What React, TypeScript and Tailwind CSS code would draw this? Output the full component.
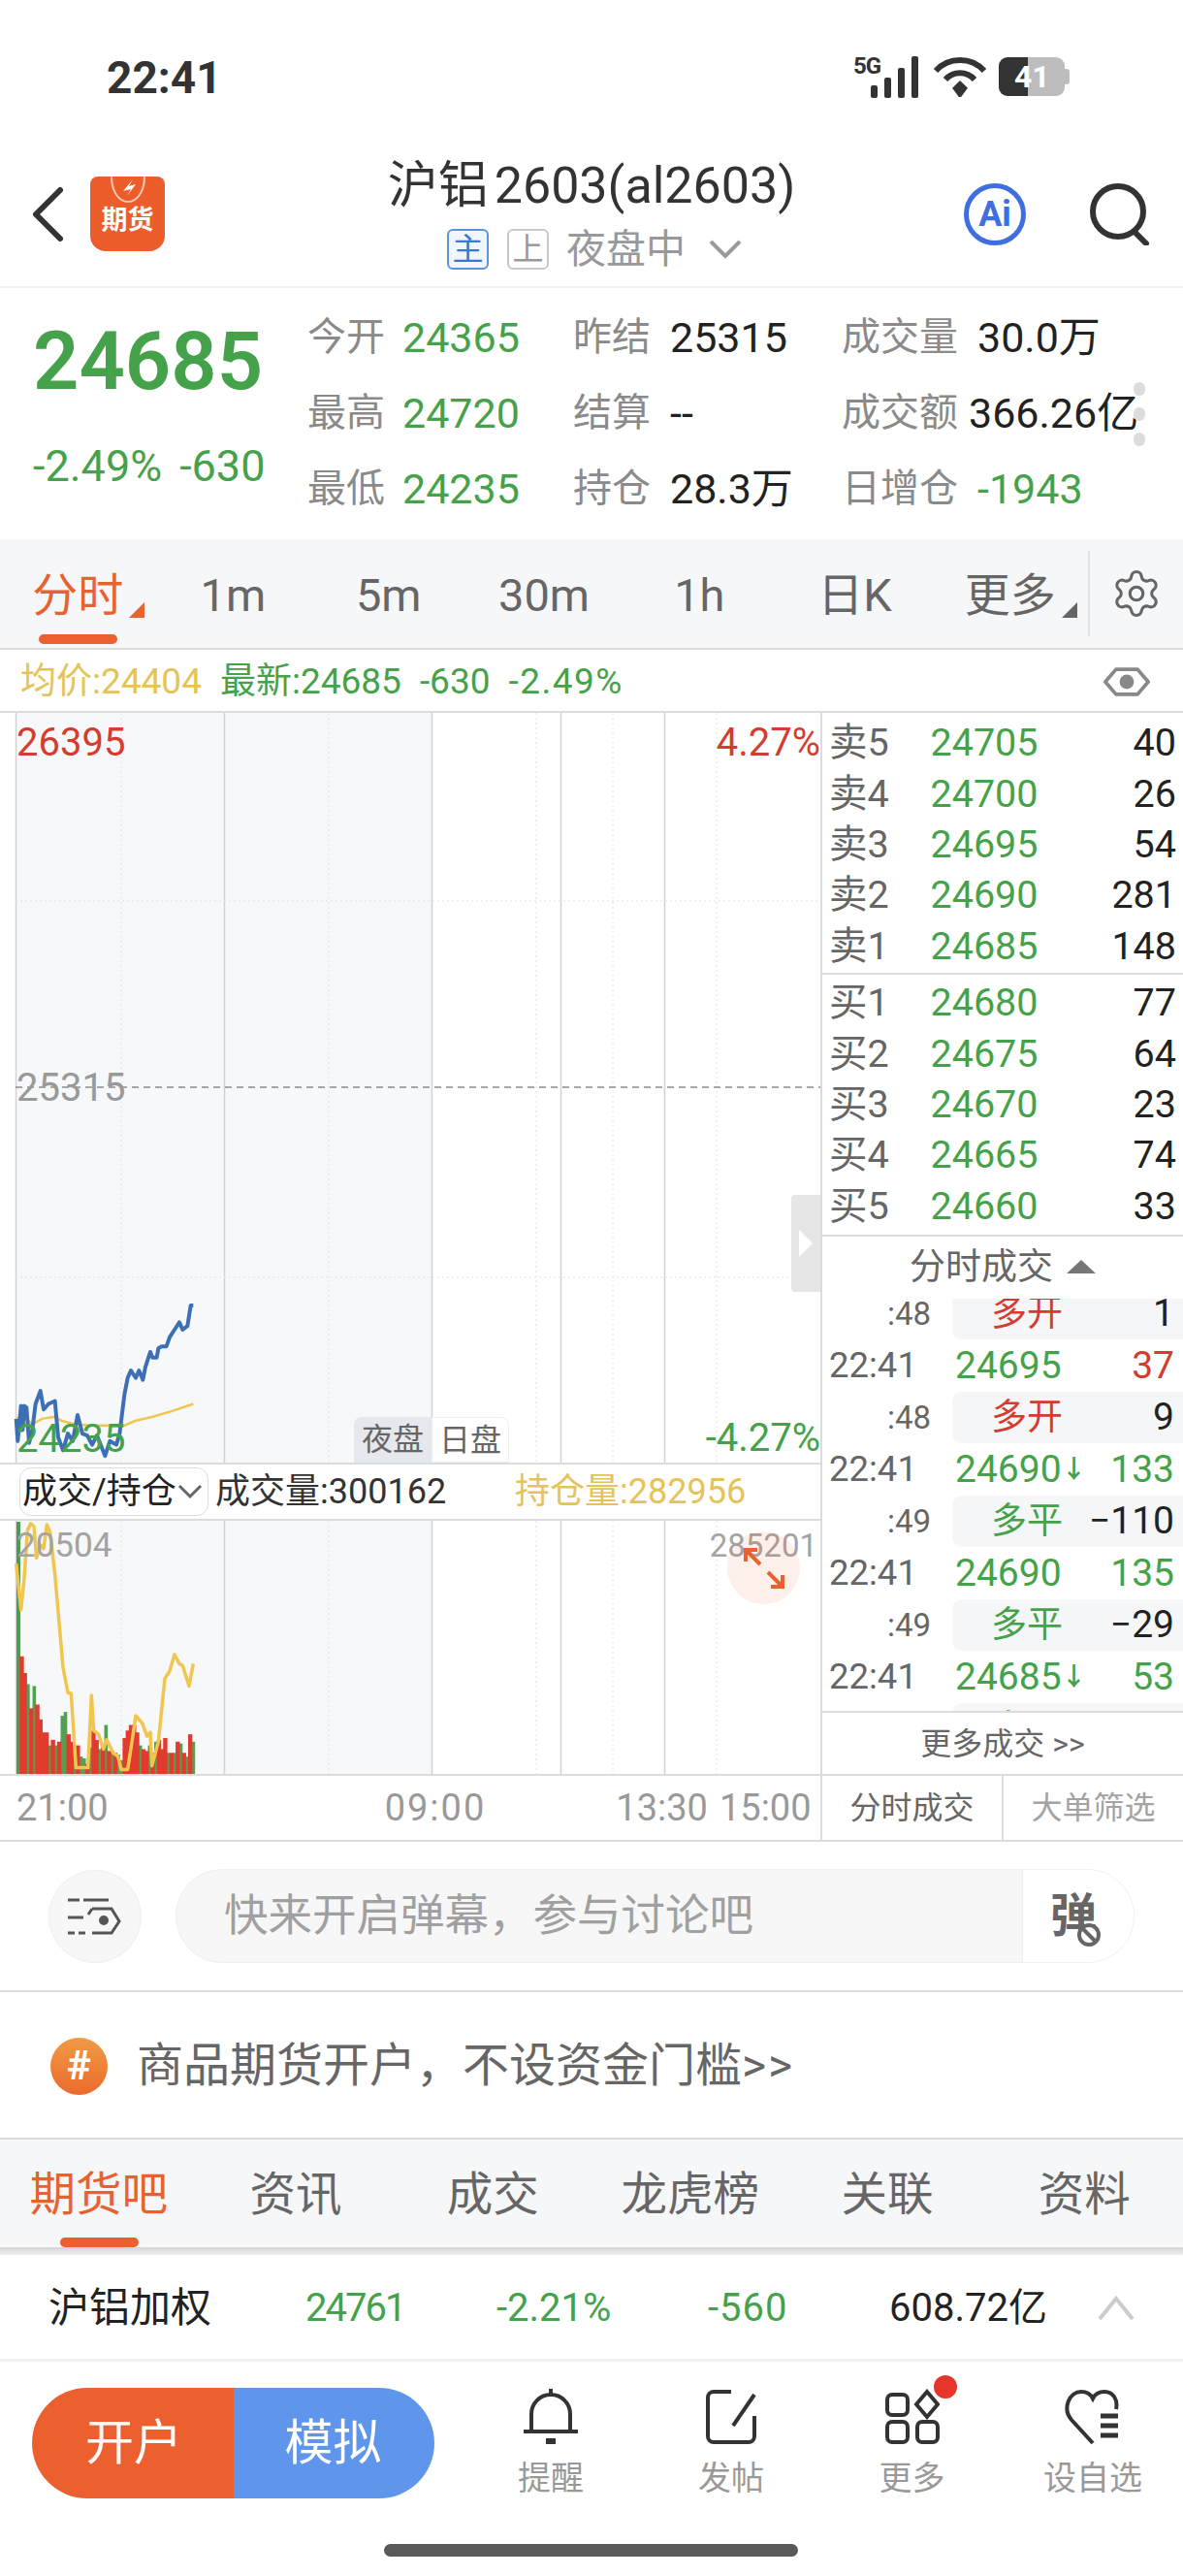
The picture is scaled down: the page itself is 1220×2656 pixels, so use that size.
import React from 'react';
import { Settings } from 'lucide-react';

const GREEN = 'text-[#46a24a]';

// chart traces, read off the reference at x*3, y*2.613 from y=1260
const priceLine = [[50,530],[55,590],[65,495],[70,560],[75,495],[82,500],[90,595],[100,560],[110,490],[125,455],[135,505],[150,490],[170,482],[180,580],[195,615],[210,570],[225,590],[240,520],[255,570],[270,575],[285,600],[300,575],[325,630],[340,590],[360,600],[370,570],[385,465],[395,420],[405,400],[420,420],[430,400],[442,425],[450,390],[465,350],[472,365],[485,365],[490,340],[500,335],[515,335],[525,310],[540,290],[555,270],[565,290],[580,280],[590,225],[598,225]];
const avgLine = [[50,530],[75,525],[100,545],[130,530],[165,525],[190,535],[230,545],[280,548],[330,548],[380,550],[420,535],[470,525],[530,510],[598,490]];
const holdLine = [[50,920],[65,1045],[75,960],[85,830],[95,812],[105,820],[113,905],[125,870],[135,880],[145,815],[155,835],[170,950],[185,1100],[195,1200],[210,1268],[220,1270],[235,1470],[265,1470],[272,1470],[283,1275],[290,1370],[305,1380],[320,1420],[330,1395],[350,1430],[365,1440],[375,1475],[395,1475],[410,1390],[420,1330],[440,1350],[455,1385],[465,1375],[470,1465],[490,1400],[510,1230],[525,1210],[540,1165],[555,1190],[565,1195],[585,1250],[598,1190]];
const volBars: [string, number][] = [['r',1170],['r',1215],['g',1245],['r',1310],['g',1250],['r',1300],['r',1340],['r',1375],['r',1375],['g',1410],['r',1395],['g',1410],['r',1400],['g',1330],['g',1320],['r',1380],['r',1400],['g',1430],['r',1410],['g',1440],['g',1445],['r',1460],['g',1415],['r',1370],['r',1395],['g',1420],['r',1405],['g',1355],['r',1425],['g',1425],['r',1430],['g',1435],['g',1450],['r',1390],['r',1370],['r',1355],['r',1355],['r',1375],['g',1410],['r',1420],['r',1425],['g',1410],['r',1430],['g',1400],['r',1395],['r',1420],['r',1390],['g',1430],['r',1430],['g',1430],['r',1400],['g',1405],['r',1430],['g',1440],['r',1380],['g',1400]];

const toPoints = (pts: number[][], top: number) =>
  pts.map(([x, y]) => `${x / 3},${1260 + y / 2.613 - top}`).join(' ');

const asks = [['卖5','24705','40'],['卖4','24700','26'],['卖3','24695','54'],['卖2','24690','281'],['卖1','24685','148']];
const bids = [['买1','24680','77'],['买2','24675','64'],['买3','24670','23'],['买4','24665','74'],['买5','24660','33']];

const trades = [
  { sec: ':48', tag: '多开', red: true, qty: '1', price: '24695', arrow: false, vol: '37', volRed: true },
  { sec: ':48', tag: '多开', red: true, qty: '9', price: '24690', arrow: true, vol: '133', volRed: false },
  { sec: ':49', tag: '多平', red: false, qty: '−110', price: '24690', arrow: false, vol: '135', volRed: false },
  { sec: ':49', tag: '多平', red: false, qty: '−29', price: '24685', arrow: true, vol: '53', volRed: false },
];

const GridLines = ({ h }: { h: number }) => (
  <>
    <rect x="16" y="0" width="429" height={h} fill="#f6f8fa" />
    {[125, 339, 553, 632, 739].map((x) => (
      <line key={x} x1={x} x2={x} y1="0" y2={h} stroke="#e2e2e2" strokeWidth="1" strokeDasharray="2 3" />
    ))}
    {[16, 231, 445, 578, 685].map((x) => (
      <line key={x} x1={x + 0.5} x2={x + 0.5} y1="0" y2={h} stroke="#d2d2d2" strokeWidth="1.5" />
    ))}
  </>
);

const StatRow = ({ label, value, valueClass, w }: { label: string; value: string; valueClass: string; w: string }) => (
  <div className="flex items-center h-[78px]">
    <span className={`text-[40px] leading-none text-[#8a8a8a] ${w}`}>{label}</span>
    <span className={`text-[43px] leading-none ${valueClass}`}>{value}</span>
  </div>
);

const App: React.FC = () => {
  return (
    <div className="w-[1220px] h-[2656px] bg-white overflow-hidden [font-family:Roboto,'Noto_Sans_CJK_SC',sans-serif] text-[#222]">
      {/* status bar */}
      <div className="h-[130px] pt-[50px] pl-[110px] pr-[116px] flex justify-between items-start">
        <span className="text-[46px] leading-[60px] font-bold text-[#333]">22:41</span>
        <div className="flex items-center gap-[12px] mt-[6px]">
          <div className="relative w-[70px] h-[46px]">
            <span className="absolute left-0 top-0 text-[24px] leading-[24px] font-bold text-[#333] tracking-[-1px]">5G</span>
            <svg className="absolute inset-0" width="70" height="46" viewBox="0 0 70 46">
              <rect x="18" y="32" width="7" height="13" rx="2" fill="#333" />
              <rect x="32" y="24" width="7" height="21" rx="2" fill="#333" />
              <rect x="46" y="14" width="7" height="31" rx="2" fill="#333" />
              <rect x="60" y="2" width="7" height="43" rx="2" fill="#333" />
            </svg>
          </div>
          <svg width="56" height="42" viewBox="0 0 56 42" fill="none" stroke="#333" strokeWidth="6">
            <path d="M3 15a34 34 0 0 1 50 0" />
            <path d="M13 24a20 20 0 0 1 30 0" />
            <path d="M22 33l6-6 6 6-6 8z" fill="#333" strokeWidth="3" />
          </svg>
          <div className="relative w-[74px] h-[40px] flex">
            <div className="w-[30px] bg-[#333] rounded-l-[9px]" />
            <div className="w-[38px] bg-[#bdbdbd] rounded-r-[9px]" />
            <div className="w-[5px] h-[16px] bg-[#bdbdbd] rounded-r-[3px] self-center" />
            <span className="absolute left-[16px] top-0 text-[32px] leading-[40px] font-bold text-white">41</span>
          </div>
        </div>
      </div>

      {/* nav */}
      <div className="h-[167px] grid grid-cols-[300px_1fr_300px] border-b-2 border-[#f0f0f0]">
        <div className="flex items-center pl-[33px] gap-[28px] pt-[16px]">
          <svg width="32" height="58" viewBox="0 0 32 58" fill="none" stroke="#333" strokeWidth="6" strokeLinecap="round" strokeLinejoin="round">
            <path d="M29 4L4 29l25 25" />
          </svg>
          <div className="w-[77px] h-[77px] rounded-b-[16px] rounded-t-[8px] bg-[#ec5d2c] flex flex-col items-center relative overflow-hidden">
            <svg width="42" height="28" viewBox="0 0 42 28" fill="none">
              <path d="M4 0c0 16 8 26 17 26S38 16 38 0" stroke="#f8c9b5" strokeWidth="2" />
              <path d="M26 3l-10 12 8-2-4 7 9-12-7 2z" fill="#fff" />
            </svg>
            <span className="text-[27px] leading-[34px] font-bold text-white">期货</span>
          </div>
        </div>
        <div className="flex flex-col items-center pt-[30px]">
          <div className="text-[52px] leading-[64px] text-[#333]">沪铝<span className="ml-[6px]">2603(al2603)</span></div>
          <div className="flex items-center mt-[11px] pl-[6px]">
            <span className="w-[43px] h-[42px] border-2 border-[#5c93dc] rounded-[6px] bg-[#f1f6fd] text-[#3a78d0] text-[32px] leading-[38px] text-center">主</span>
            <span className="ml-[19px] w-[43px] h-[42px] border-2 border-[#c8c8c8] rounded-[6px] text-[#999] text-[32px] leading-[38px] text-center">上</span>
            <span className="ml-[18px] text-[41px] leading-[44px] text-[#999]">夜盘中</span>
            <svg className="ml-[24px]" width="34" height="20" viewBox="0 0 34 20" fill="none" stroke="#999" strokeWidth="4">
              <path d="M2 2l15 15L32 2" />
            </svg>
          </div>
        </div>
        <div className="flex items-center justify-end pr-[34px] gap-[66px] pt-[16px]">
          <div className="w-[64px] h-[64px] rounded-full border-[5px] border-[#3f6ee0] flex items-center justify-center">
            <span className="text-[36px] leading-none font-bold text-[#3f6ee0]">Ai</span>
          </div>
          <svg width="62" height="64" viewBox="0 0 62 64" fill="none" stroke="#333" strokeWidth="6" strokeLinecap="round">
            <circle cx="29" cy="29" r="26" />
            <path d="M46 50l12 12" />
          </svg>
        </div>
      </div>

      {/* quote */}
      <div className="h-[259px] flex relative">
        <div className="w-[317px] pl-[34px] pt-[31px]">
          <div className={`text-[83px] leading-[90px] font-semibold ${GREEN}`}>24685</div>
          <div className={`mt-[38px] text-[45px] leading-[50px] ${GREEN} flex gap-[18px]`}>
            <span>-2.49%</span><span>-630</span>
          </div>
        </div>
        <div className="flex pt-[12px]">
          <div className="w-[274px]">
            <StatRow label="今开" value="24365" valueClass={GREEN} w="w-[98px]" />
            <StatRow label="最高" value="24720" valueClass={GREEN} w="w-[98px]" />
            <StatRow label="最低" value="24235" valueClass={GREEN} w="w-[98px]" />
          </div>
          <div className="w-[277px]">
            <StatRow label="昨结" value="25315" valueClass="text-[#222]" w="w-[100px]" />
            <StatRow label="结算" value="--" valueClass="text-[#222]" w="w-[100px]" />
            <StatRow label="持仓" value="28.3万" valueClass="text-[#222]" w="w-[100px]" />
          </div>
          <div>
            <StatRow label="成交量" value="30.0万" valueClass="text-[#222]" w="w-[140px]" />
            <StatRow label="成交额" value="366.26亿" valueClass="text-[#222]" w="w-[131px]" />
            <StatRow label="日增仓" value="-1943" valueClass={GREEN} w="w-[140px]" />
          </div>
        </div>
        <div className="absolute left-[1169px] top-[97px] flex flex-col gap-[12px]">
          <span className="w-[12px] h-[14px] rounded-full bg-[#dcdcdc]" />
          <span className="w-[12px] h-[14px] rounded-full bg-[#dcdcdc]" />
          <span className="w-[12px] h-[14px] rounded-full bg-[#dcdcdc]" />
        </div>
      </div>

      {/* period tabs */}
      <div className="h-[114px] bg-[#f6f7f9] border-b-2 border-[#dcdcdc] flex items-stretch">
        <div className="w-[1122px] grid grid-cols-7">
          {['分时', '1m', '5m', '30m', '1h', '日K', '更多'].map((t, i) => (
            <div key={t} className="relative flex items-center justify-center pt-[2px]">
              <span className={`relative text-[47px] leading-none ${i === 0 ? 'text-[#e8622f]' : 'text-[#666]'}`}>
                {t}
                {(i === 0 || i === 6) && (
                  <span className={`absolute -right-[22px] bottom-0 w-0 h-0 border-l-[16px] border-l-transparent border-b-[16px] ${i === 0 ? 'border-b-[#e8622f]' : 'border-b-[#666]'}`} />
                )}
              </span>
              {i === 0 && <span className="absolute left-[40px] bottom-[4px] w-[81px] h-[10px] rounded-[5px] bg-[#ec5f2e]" />}
            </div>
          ))}
        </div>
        <div className="flex-1 my-[12px] border-l-2 border-[#e4e4e4] flex items-center justify-center">
          <Settings size={54} strokeWidth={1.4} className="text-[#666]" />
        </div>
      </div>

      {/* legend */}
      <div className="h-[63px] flex items-center pl-[21px] pr-[34px] gap-[19px] text-[37px] leading-none pt-[2px]">
        <span className="text-[#e6c35a]">均价:24404</span>
        <span className={GREEN}>最新:24685</span>
        <span className={GREEN}>-630</span>
        <span className={`${GREEN} tracking-[1.5px]`}>-2.49%</span>
        <svg className="ml-auto" width="48" height="34" viewBox="0 0 52 34" fill="none" stroke="#888" strokeWidth="4">
          <path d="M2 17L14 3h24l12 14-12 14H14z" strokeLinejoin="round" />
          <circle cx="26" cy="17" r="6" fill="#888" />
        </svg>
      </div>

      {/* chart + order book */}
      <div className="h-[1166px] flex border-t-2 border-b-2 border-[#dcdcdc]">
        <div className="w-[846px] flex flex-col">
          {/* price chart */}
          <div className="relative h-[773px]">
            <svg className="absolute inset-0" width="846" height="773" viewBox="0 0 846 773" fill="none">
              <GridLines h={773} />
              <line x1="16" x2="846" y1="194" y2="194" stroke="#e2e2e2" strokeDasharray="2 3" />
              <line x1="16" x2="846" y1="582" y2="582" stroke="#e2e2e2" strokeDasharray="2 3" />
              <line x1="16" x2="846" y1="386" y2="386" stroke="#8c8c8c" strokeWidth="1.5" strokeDasharray="7 5" />
              <polyline points={toPoints(avgLine, 735)} stroke="#f0c64f" strokeWidth="2.5" />
              <polyline points={toPoints(priceLine, 735)} stroke="#3d6fb6" strokeWidth="4" strokeLinejoin="round" />
            </svg>
            <span className="absolute left-[17px] top-[9px] text-[40px] leading-[44px] text-[#d43c30]">26395</span>
            <span className="absolute right-0 top-[9px] text-[40px] leading-[44px] text-[#d43c30]">4.27%</span>
            <span className="absolute left-[17px] top-[365px] text-[40px] leading-[44px] text-[#999]">25315</span>
            <span className={`absolute left-[17px] top-[727px] text-[40px] leading-[44px] ${GREEN}`}>24235</span>
            <span className={`absolute right-0 top-[726px] text-[40px] leading-[44px] ${GREEN}`}>-4.27%</span>
            <div className="absolute left-[365px] bottom-0 w-[160px] h-[47px] flex text-[32px] leading-[47px] text-[#666]">
              <span className="w-[80px] text-center bg-[#e5e8ec] rounded-tl-[8px]">夜盘</span>
              <span className="w-[80px] text-center bg-white border border-[#eeeeee] rounded-tr-[8px]">日盘</span>
            </div>
            <div className="absolute right-0 top-[497px] w-[30px] h-[100px] bg-[#e6e6e6] rounded-l-[4px] flex items-center justify-center">
              <span className="w-0 h-0 border-l-[14px] border-l-white border-y-[14px] border-y-transparent" />
            </div>
          </div>

          {/* indicator row */}
          <div className="h-[60px] flex items-center border-t-2 border-b-2 border-[#dcdcdc] text-[36px] leading-none">
            <div className="ml-[20px] w-[195px] h-[50px] pl-[2px] border border-[#dddddd] rounded-[12px] flex items-center gap-[1px]">
              <span className="whitespace-nowrap">成交/持仓</span>
              <svg width="26" height="16" viewBox="0 0 26 16" fill="none" stroke="#666" strokeWidth="3"><path d="M2 2l11 11L24 2" /></svg>
            </div>
            <span className="ml-[7px] w-[309px] text-[#333]">成交量:300162</span>
            <span className="text-[#e6c35a]">持仓量:282956</span>
          </div>

          {/* volume chart */}
          <div className="relative h-[263px] border-b-2 border-[#dcdcdc]">
            <svg className="absolute inset-0" width="846" height="261" viewBox="0 0 846 261" fill="none">
              <GridLines h={261} />
              <rect x="17" y="1" width="4" height="261" fill="#4f9c50" />
              {volBars.map(([c, top], i) => {
                const x = (62 + i * 9.65) / 3;
                const y = 1260 + top / 2.613 - 1568;
                return c === 'g' ? <rect key={i} x={x} y={y} width="3.6" height={261 - y} fill="#559f52" /> : null;
              })}
              {volBars.map(([c, top], i) => {
                const x = (62 + i * 9.65) / 3;
                const y = 1260 + top / 2.613 - 1568;
                return c === 'r' ? <rect key={i} x={x - 0.4} y={y} width="4.4" height={261 - y} fill="#e23b2e" /> : null;
              })}
              <polyline points={toPoints(holdLine, 1568)} stroke="#f0c64f" strokeWidth="3.5" strokeLinejoin="round" />
            </svg>
            <span className="absolute left-[17px] top-[6px] text-[35px] leading-[40px] text-[#a3a3a3]">20504</span>
            <span className="absolute right-[3px] top-[6px] text-[33px] leading-[40px] text-[#a3a3a3]">285201</span>
            <div className="absolute left-[750px] top-[11px] w-[75px] h-[75px] rounded-full bg-[#ec5f2e]/10 flex items-center justify-center">
              <svg width="44" height="44" viewBox="0 0 44 44" fill="none" stroke="#e8622f" strokeWidth="4">
                <path d="M3 15V3h12M3 3l15 15M26 26l15 15M41 29v12H29" />
              </svg>
            </div>
          </div>

          {/* time axis */}
          <div className="h-[66px] flex items-center relative text-[38px] leading-none text-[#999]">
            <span className="ml-[17px]">21:00</span>
            <span className="ml-[285px] tracking-[2px]">09:00</span>
            <span className="ml-[134px]">13:30</span>
            <span className="ml-[12px]">15:00</span>
          </div>
        </div>

        {/* order book */}
        <div className="flex-1 border-l-2 border-[#dcdcdc] flex flex-col min-w-0">
          <div className="h-[270px] pt-[5px] border-b-2 border-[#dcdcdc]">
            {asks.map((r) => <BookRow key={r[0]} row={r} />)}
          </div>
          <div className="h-[270px] pt-[3px] border-b-2 border-[#dcdcdc]">
            {bids.map((r) => <BookRow key={r[0]} row={r} />)}
          </div>
          <div className="h-[64px] shrink-0 flex items-center justify-center gap-[14px] text-[37px] leading-none text-[#666] pb-[2px]">
            <span>分时成交</span>
            <span className="w-0 h-0 border-x-[15px] border-x-transparent border-b-[14px] border-b-[#777]" />
          </div>
          <div className="h-[427px] shrink-0 overflow-hidden border-b-2 border-[#dcdcdc]">
            <div className="-mt-[11px]">
              {trades.map((t, i) => (
                <div key={i}>
                  <div className="h-[53px] flex items-center">
                    <span className="w-[112px] text-right text-[33px] leading-none text-[#666]">{t.sec}</span>
                    <div className="ml-[22px] flex-1 h-[53px] bg-[#f5f6f8] rounded-l-[10px] flex items-center pr-[9px]">
                      <span className={`ml-[40px] text-[37px] leading-none ${t.red ? 'text-[#d43c30]' : GREEN}`}>{t.tag}</span>
                      <span className="ml-auto text-[39px] leading-none">{t.qty}</span>
                    </div>
                  </div>
                  <div className="h-[54px] flex items-center pr-[9px]">
                    <span className="ml-[7px] w-[130px] text-[36.5px] leading-none text-[#666]">22:41</span>
                    <span className={`text-[39px] leading-none ${GREEN}`}>{t.price}</span>
                    {t.arrow && <span className={`text-[26px] leading-none font-bold ${GREEN}`}>↓</span>}
                    <span className={`ml-auto text-[39px] leading-none ${t.volRed ? 'text-[#d43c30]' : GREEN}`}>{t.vol}</span>
                  </div>
                </div>
              ))}
              <div className="h-[53px] flex items-center">
                <span className="w-[112px] text-right text-[33px] leading-none text-[#666]">:50</span>
                <div className="ml-[22px] flex-1 h-[53px] bg-[#f5f6f8] rounded-l-[10px] flex items-center">
                  <span className={`ml-[40px] text-[37px] leading-none ${GREEN}`}>多平</span>
                </div>
              </div>
            </div>
          </div>
          <div className="h-[65px] shrink-0 flex items-center justify-center text-[32px] leading-none text-[#666] border-b-2 border-[#dcdcdc]">
            更多成交 &gt;&gt;
          </div>
          <div className="flex-1 flex text-[32px] leading-none">
            <span className="w-[187px] border-r-2 border-[#dcdcdc] flex items-center justify-center text-[#666]">分时成交</span>
            <span className="flex-1 flex items-center justify-center text-[#a3a3a3]">大单筛选</span>
          </div>
        </div>
      </div>

      {/* comment bar */}
      <div className="h-[155px] pl-[50px] pr-[50px] flex items-center gap-[35px] border-b-2 border-[#dcdcdc]">
        <div className="w-[96px] h-[96px] rounded-full bg-[#f7f7f7] border border-[#eeeeee] flex items-center justify-center">
          <svg width="56" height="38" viewBox="0 0 56 38" fill="none" stroke="#555" strokeWidth="3">
            <path d="M0 2h12M16 2h26M0 20h16M0 36h7M11 36h7" />
            <path d="M25 11h20l8 13-8 12H25M25 11l-4 6" />
            <circle cx="37" cy="23" r="3.5" fill="#555" />
          </svg>
        </div>
        <div className="flex-1 h-[97px] rounded-full bg-[#f7f7f7] border border-[#eeeeee] flex items-center overflow-hidden">
          <span className="ml-[49px] text-[45.5px] leading-none text-[#a0a0a0]">快来开启弹幕，参与讨论吧</span>
          <div className="ml-auto relative w-[115px] h-full bg-white border-l border-[#eeeeee] flex items-center pl-[28px]">
            <span className="text-[48px] leading-none font-bold text-[#666]">弹</span>
            <svg className="absolute left-[55px] top-[54px]" width="26" height="26" viewBox="0 0 26 26" fill="#fff" stroke="#666" strokeWidth="4">
              <circle cx="13" cy="13" r="10" />
              <path d="M6 6l14 14" />
            </svg>
          </div>
        </div>
      </div>

      {/* promo */}
      <div className="h-[152px] pl-[52px] flex items-center gap-[30px] border-b-2 border-[#dcdcdc] pt-[2px]">
        <div className="w-[59px] h-[59px] rounded-full bg-gradient-to-b from-[#f09a45] to-[#ea6a2c] flex items-center justify-center text-white text-[42px] font-bold leading-none">#</div>
        <span className="text-[48px] leading-none text-[#666]">商品期货开户，不设资金门槛<span className="tracking-[2px]">&gt;&gt;</span></span>
      </div>

      {/* content tabs */}
      <div className="h-[113px] bg-[#f6f7f9] border-b-2 border-[#d8d8d8] grid grid-cols-6">
        {['期货吧', '资讯', '成交', '龙虎榜', '关联', '资料'].map((t, i) => (
          <div key={t} className="relative flex items-center justify-center pt-[5px]">
            <span className={`text-[47.5px] leading-none ${i === 0 ? 'text-[#e8622f]' : 'text-[#666]'}`}>{t}</span>
            {i === 0 && <span className="absolute left-[62px] bottom-0 w-[81px] h-[10px] rounded-[5px] bg-[#ec5f2e]" />}
          </div>
        ))}
      </div>
      <div className="h-[6px] bg-gradient-to-b from-[#dddddd] to-[#eeeeee]" />

      {/* weighted contract */}
      <div className="h-[110px] flex items-center border-b-[3px] border-[#f0f0f0] text-[40px] leading-none pt-[2px]">
        <span className="ml-[50px] w-[265px] text-[42px]">沪铝加权</span>
        <span className={`w-[197px] tracking-[-2px] ${GREEN}`}>24761</span>
        <span className={`w-[218px] ${GREEN}`}>-2.21%</span>
        <span className={`w-[187px] tracking-[1px] ${GREEN}`}>-560</span>
        <span className="text-[#222]">608.72亿</span>
        <svg className="ml-[52px]" width="38" height="26" viewBox="0 0 38 26" fill="none" stroke="#cccccc" strokeWidth="4"><path d="M2 24L19 3l17 21" /></svg>
      </div>

      {/* footer actions */}
      <div className="h-[221px] relative">
        <div className="flex items-start pt-[27px]">
          <div className="ml-[33px] w-[416px] h-[114px] rounded-full overflow-hidden flex text-white text-[50px] leading-none">
            <span className="w-[208px] bg-[#ec5f2e] flex items-center justify-center pl-[2px]">开户</span>
            <span className="flex-1 bg-[#5f95ea] flex items-center justify-center pr-[2px]">模拟</span>
          </div>
          <div className="ml-[27px] grid grid-cols-[186px_186px_187px_186px]">
            <FootItem label="提醒">
              <svg width="60" height="58" viewBox="0 0 60 58" fill="none" stroke="#333" strokeWidth="4">
                <path d="M30 0v6M10 44V26a20 20 0 0 1 40 0v18M2 44h56" />
                <path d="M25 54h10" strokeWidth="6" />
              </svg>
            </FootItem>
            <FootItem label="发帖">
              <svg width="56" height="58" viewBox="0 0 56 58" fill="none" stroke="#333" strokeWidth="4">
                <path d="M28 3H10a6 6 0 0 0-6 6v40a6 6 0 0 0 6 6h36a6 6 0 0 0 6-6V28" />
                <path d="M52 6L30 38" />
              </svg>
            </FootItem>
            <FootItem label="更多">
              <div className="relative">
                <svg width="56" height="58" viewBox="0 0 56 58" fill="none" stroke="#333" strokeWidth="4">
                  <rect x="2" y="6" width="21" height="21" rx="5" />
                  <rect x="2" y="34" width="21" height="21" rx="5" />
                  <rect x="33" y="34" width="21" height="21" rx="5" />
                  <path d="M43 3l11 13-11 13-11-13z" />
                </svg>
                <span className="absolute -right-[18px] -top-[14px] w-[24px] h-[24px] rounded-full bg-[#e6352b]" />
              </div>
            </FootItem>
            <FootItem label="设自选">
              <svg width="60" height="58" viewBox="0 0 60 58" fill="none" stroke="#333" strokeWidth="4">
                <path d="M30 56L8 32C-2 20 6 3 18 3c6 0 10 3 12 7 2-4 6-7 12-7 9 0 14 8 12 18" />
                <path d="M38 28h18M38 38h18M38 48h18" strokeWidth="5" />
              </svg>
            </FootItem>
          </div>
        </div>
        <div className="absolute left-[396px] top-[188px] w-[427px] h-[13px] rounded-full bg-[#595959]" />
      </div>
    </div>
  );
};

const BookRow = ({ row }: { row: string[] }) => (
  <div className="h-[52.3px] flex items-center pl-[7px] pr-[7px] text-[39.5px] leading-none">
    <span className="w-[64px] text-[#666] whitespace-nowrap">{row[0]}</span>
    <span className={`w-[192px] text-center ${GREEN}`}>{row[1]}</span>
    <span className="ml-auto text-[#222]">{row[2]}</span>
  </div>
);

const FootItem = ({ label, children }: { label: string; children: React.ReactNode }) => (
  <div className="flex flex-col items-center">
    <div className="h-[60px] flex items-center">{children}</div>
    <span className="mt-[16px] text-[34px] leading-none text-[#999]">{label}</span>
  </div>
);

export default App;
